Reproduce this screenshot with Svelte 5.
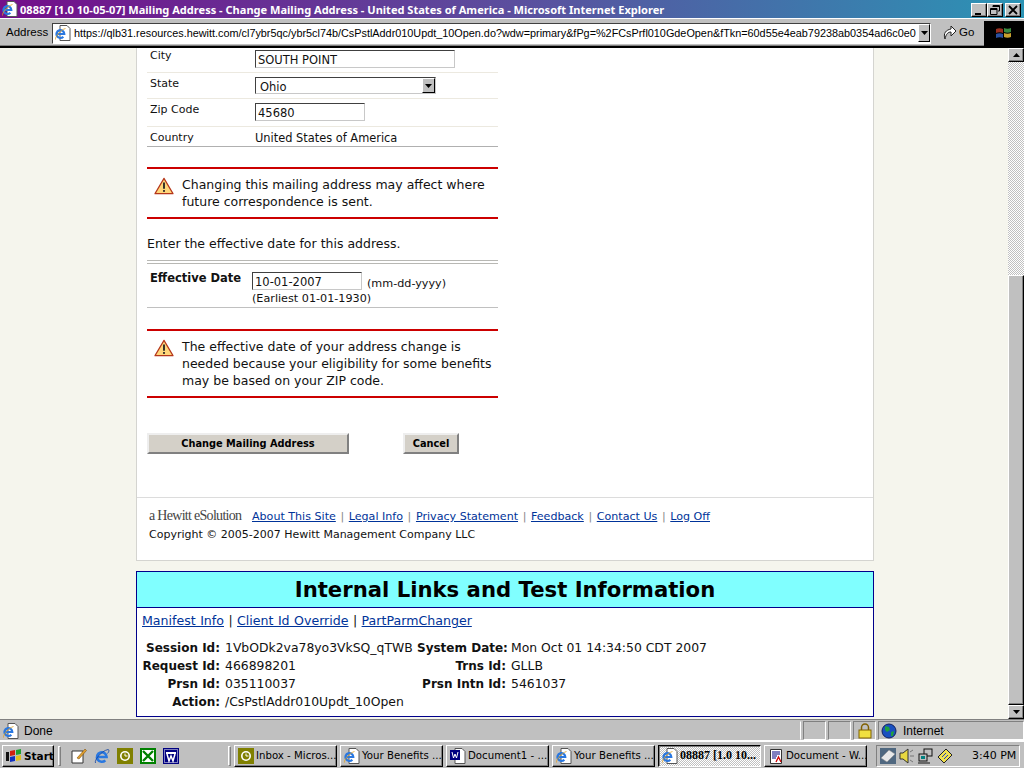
<script>
  const rows = [
    { label: 'City', value: 'SOUTH POINT', kind: 'input', cls: 'w-city', h: 25, pad: 1 },
    { label: 'State', value: 'Ohio', kind: 'select', h: 26, pad: 4 },
    { label: 'Zip Code', value: '45680', kind: 'input', cls: 'w-zip', h: 28, pad: 4 },
    { label: 'Country', value: 'United States of America', kind: 'text', h: 20, pad: 4 }
  ];

  const footerLinks = ['About This Site', 'Legal Info', 'Privacy Statement', 'Feedback', 'Contact Us', 'Log Off'];
  const testLinks = ['Manifest Info', 'Client Id Override', 'PartParmChanger'];

  const info = [
    ['Session Id:', '1VbODk2va78yo3VkSQ_qTWB', 'System Date:', 'Mon Oct 01 14:34:50 CDT 2007'],
    ['Request Id:', '466898201', 'Trns Id:', 'GLLB'],
    ['Prsn Id:', '035110037', 'Prsn Intn Id:', '5461037'],
    ['Action:', '/CsPstlAddr010Updt_10Open', '', '']
  ];

  const tasks = [
    { icon: 'clock', label: 'Inbox - Micros...' },
    { icon: 'page', label: 'Your Benefits ...' },
    { icon: 'word', label: 'Document1 - ...' },
    { icon: 'page', label: 'Your Benefits ...' },
    { icon: 'page', label: '08887 [1.0 10...', active: true },
    { icon: 'note', label: 'Document - W...' }
  ];
</script>

{#snippet ie(size)}
  <svg width={size} height={size} viewBox="0 0 16 16">
    <path d="M3 9h9.600a4.800 4.800 0 1 0-1.300 3.300" fill="none" stroke="#2a78e0" stroke-width="2.600" />
    <path d="M1.500 15C0 12.500 7 3 14 1.500c1.500 0 1 2.500-.5 4" fill="none" stroke="#1040a0" stroke-width=".8" />
  </svg>
{/snippet}

{#snippet warning()}
  <svg class="warn" width="20" height="18" viewBox="0 0 22 20">
    <path d="M11 1.500 21 18.500H1Z" fill="#ffd67a" stroke="#b5361a" stroke-width="1.300" stroke-linejoin="round" />
    <path d="M11 6v7" stroke="#222" stroke-width="2" />
    <rect x="10" y="14.500" width="2" height="2" fill="#222" />
  </svg>
{/snippet}

{#snippet clock()}
  <svg width="16" height="16" viewBox="0 0 16 16">
    <rect width="16" height="16" fill="#808000" />
    <circle cx="8" cy="8" r="5" fill="#fff" />
    <circle cx="8" cy="8" r="3.400" fill="#808000" />
    <path d="M8 5.500V8h2.500" fill="none" stroke="#fff" />
  </svg>
{/snippet}

{#snippet word()}
  <svg width="16" height="16" viewBox="0 0 16 16">
    <rect width="16" height="16" fill="#000080" />
    <rect x="1.500" y="1.500" width="13" height="13" fill="none" stroke="#fff" stroke-dasharray="1 1" />
    <path d="M3 4h10v2H3z" fill="#fff" />
    <path d="M4 6l2 7 2-5 2 5 2-7" fill="none" stroke="#fff" stroke-width="1.500" />
  </svg>
{/snippet}

{#snippet excel()}
  <svg width="16" height="16" viewBox="0 0 16 16">
    <rect width="16" height="16" fill="#008000" />
    <rect x="2" y="2" width="12" height="12" fill="#fff" />
    <path d="M3 3l10 10M13 3 3 13" stroke="#008000" stroke-width="2.400" />
  </svg>
{/snippet}

{#snippet pageIcon()}
  <svg width="16" height="16" viewBox="0 0 16 16">
    <path d="M5 .5h7l3 3v12H5Z" fill="#fff" stroke="#555" />
    <path d="M1.500 9h7.800a3.900 3.900 0 1 0-1 2.700" fill="none" stroke="#2a78e0" stroke-width="2.200" />
    <path d="M.5 14.500C0 12 5 5 10.500 3.500" fill="none" stroke="#e0a020" stroke-width=".8" />
  </svg>
{/snippet}

{#snippet taskIcon(name)}
  {#if name === 'clock'}
    {@render clock()}
  {:else if name === 'page'}
    {@render pageIcon()}
  {:else if name === 'word'}
    <svg width="16" height="16" viewBox="0 0 16 16">
      <path d="M5 .5h7l3 3v12H5Z" fill="#fff" stroke="#555" />
      <rect y="2" width="10" height="10" fill="#000080" />
      <path d="M2 4l1.500 6L5 6l1.500 4L8 4" fill="none" stroke="#fff" />
    </svg>
  {:else}
    <svg width="16" height="16" viewBox="0 0 16 16">
      <path d="M2.500 1.500h11v14h-11Z" fill="#fff" stroke="#333" />
      <path d="M4 4h8M4 6h8M4 8h5M4 10h4" stroke="#000080" />
      <path d="M8 14l2.500-5L13 14" fill="none" stroke="#d00000" stroke-width="1.300" />
    </svg>
  {/if}
{/snippet}

<div class="window">
  <header class="titlebar">
    <span class="title-icon">{@render pageIcon()}</span>
    <span class="title-text">08887 [1.0 10-05-07] Mailing Address - Change Mailing Address - United States of America - Microsoft Internet Explorer</span>
    <div class="caption">
      <button class="cap" aria-label="Minimize"><svg width="10" height="10"><path d="M1 8h6v2H1z" /></svg></button>
      <button class="cap" aria-label="Restore">
        <svg width="10" height="10" viewBox="0 0 10 10"><path d="M3 .5h6.500V6H8M3 .5V2M3 1.500h6.500" fill="none" stroke="#000" /><path d="M.5 3.500H7v6H.5ZM.5 4.500H7" fill="none" stroke="#000" /></svg>
      </button>
      <button class="cap close" aria-label="Close">
        <svg width="10" height="10" viewBox="0 0 10 10"><path d="M1 1l8 8M9 1 1 9" stroke="#000" stroke-width="1.800" /></svg>
      </button>
    </div>
  </header>

  <nav class="addressbar">
    <span class="addr-label">Address</span>
    <div class="addr-field">
      <span class="addr-icon">{@render pageIcon()}</span>
      <span class="addr-url">https://qlb31.resources.hewitt.com/cl7ybr5qc/ybr5cl74b/CsPstlAddr010Updt_10Open.do?wdw=primary&amp;fPg=%2FCsPrfl010GdeOpen&amp;fTkn=60d55e4eab79238ab0354ad6c0e0</span>
      <button class="drop" aria-label="Open list"><svg width="7" height="4"><path d="M0 0h7L3.500 4Z" /></svg></button>
    </div>
    <div class="go">
      <svg width="16" height="16" viewBox="0 0 16 16"><path d="M3 15C1 9 4 6 9 5V2l5 5-5 5V8C6 8 4 10 3 15Z" fill="#fff" stroke="#222" /></svg>
      <span>Go</span>
    </div>
    <div class="throbber">
      <svg width="18" height="16" viewBox="0 0 18 16">
        <path d="M1 4c2-1 5-1 7 0v4c-2-1-5-1-7 0Z" fill="#9a3020" />
        <path d="M9 3c2 1 5 1 7 0v4c-2 1-5 1-7 0Z" fill="#3a8a40" />
        <path d="M1 9c2-1 5-1 7 0v4c-2-1-5-1-7 0Z" fill="#2a50a0" />
        <path d="M9 8c2 1 5 1 7 0v4c-2 1-5 1-7 0Z" fill="#c8a030" />
      </svg>
    </div>
  </nav>

  <div class="viewport">
    <main class="page">
      <div class="sheet">
        <section class="form">
          {#each rows as row}
            <div class="row" style="height: {row.h}px; padding-top: {row.pad}px">
              <span class="label">{row.label}</span>
              {#if row.kind === 'input'}
                <span class="input {row.cls}">{row.value}</span>
              {:else if row.kind === 'select'}
                <span class="input select">
                  <span class="sel-val">{row.value}</span>
                  <span class="sel-btn"><svg width="7" height="4"><path d="M0 0h7L3.500 4Z" /></svg></span>
                </span>
              {:else}
                <span class="value">{row.value}</span>
              {/if}
            </div>
          {/each}

          <div class="alert first">
            {@render warning()}
            <p>Changing this mailing address may affect where future correspondence is sent.</p>
          </div>

          <p class="enter">Enter the effective date for this address.</p>

          <div class="date-row">
            <strong class="date-label">Effective Date</strong>
            <div class="date-col">
              <div class="date-line">
                <span class="input w-date">10-01-2007</span>
                <span class="hint">(mm-dd-yyyy)</span>
              </div>
              <span class="hint earliest">(Earliest 01-01-1930)</span>
            </div>
          </div>

          <div class="alert second">
            {@render warning()}
            <p>The effective date of your address change is needed because your eligibility for some benefits may be based on your ZIP code.</p>
          </div>

          <div class="actions">
            <button class="btn change">Change Mailing Address</button>
            <button class="btn cancel">Cancel</button>
          </div>
        </section>

        <footer class="foot">
          <div class="foot-links">
            <span class="brand">a Hewitt eSolution</span>
            {#each footerLinks as link, i}
              {#if i > 0}<span class="pipe">|</span>{/if}
              <a href="#top">{link}</a>
            {/each}
          </div>
          <div class="copy">Copyright © 2005-2007 Hewitt Management Company LLC</div>
        </footer>
      </div>

      <section class="test">
        <h1>Internal Links and Test Information</h1>
        <div class="test-links">
          {#each testLinks as link, i}
            {#if i > 0}{' | '}{/if}<a href="#top">{link}</a>
          {/each}
        </div>
        <div class="info">
          {#each info as r}
            <b>{r[0]}</b><span>{r[1]}</span><b>{r[2]}</b><span>{r[3]}</span>
          {/each}
        </div>
      </section>
    </main>

    <aside class="scrollbar">
      <button class="arrow" aria-label="Scroll up"><svg width="7" height="4"><path d="M3.500 0 7 4H0Z" /></svg></button>
      <div class="track"><div class="thumb"></div></div>
      <button class="arrow" aria-label="Scroll down"><svg width="7" height="4"><path d="M0 0h7L3.500 4Z" /></svg></button>
    </aside>
  </div>

  <div class="statusbar">
    <div class="st-main">
      <span class="st-icon">{@render pageIcon()}</span>
      <span>Done</span>
    </div>
    <div class="st-cell"></div>
    <div class="st-cell"></div>
    <div class="st-cell lock">
      <svg width="14" height="16" viewBox="0 0 14 16">
        <path d="M3.500 8V4.500a3.500 3.500 0 0 1 7 0V8" fill="none" stroke="#806000" stroke-width="1.500" />
        <rect x="1" y="7" width="12" height="8" fill="#f0e040" stroke="#806000" />
      </svg>
    </div>
    <div class="st-zone">
      <svg width="16" height="16" viewBox="0 0 16 16">
        <circle cx="8" cy="8" r="7" fill="#1a50c0" stroke="#102060" />
        <path d="M4 3l4 1 1 3-3 2-2-2ZM10 9l3-1-1 5-2 0Z" fill="#20a040" />
      </svg>
      <span>Internet</span>
    </div>
  </div>

  <footer class="taskbar">
    <button class="start">
      <svg width="16" height="14" viewBox="0 0 16 14">
        <path d="M0 3h3v9H0Z" fill="#111" />
        <path d="M4 2l5-1v5l-5 1Z" fill="#d02010" />
        <path d="M10 1l5-1v5l-5 1Z" fill="#20a030" />
        <path d="M4 8l5-1v5l-5 1Z" fill="#1030c0" />
        <path d="M10 7l5-1v5l-5 1Z" fill="#e0c020" />
      </svg>
      <span>Start</span>
    </button>
    <span class="grip"></span>
    <div class="quick">
      <svg width="16" height="16" viewBox="0 0 16 16">
        <path d="M1 3h11v12H1Z" fill="#fff" stroke="#333" />
        <path d="M6 10 14 1l1.500 1.500L8 11Z" fill="#e0a030" stroke="#704000" stroke-width=".5" />
      </svg>
      {@render ie(16)}
      {@render clock()}
      {@render excel()}
      {@render word()}
    </div>
    <span class="grip"></span>
    <div class="tasks">
      {#each tasks as task}
        <button class="task" class:active={task.active}>
          {@render taskIcon(task.icon)}
          <span>{task.label}</span>
        </button>
      {/each}
    </div>
    <div class="tray">
      <svg width="16" height="16" viewBox="0 0 16 16">
        <rect width="16" height="16" fill="#506880" />
        <path d="M1 10 9 2l6 4-8 8Z" fill="#e8e8e8" stroke="#888" stroke-width=".5" />
      </svg>
      <svg width="16" height="16" viewBox="0 0 16 16">
        <path d="M1 5h3l5-4v14l-5-4H1Z" fill="#e8d840" stroke="#333" />
        <path d="M11 8h4M11 4l3-2M11 12l3 2" stroke="#777" />
      </svg>
      <svg width="16" height="16" viewBox="0 0 16 16">
        <rect x="6" y="1" width="8" height="7" fill="#c0c0c0" stroke="#111" />
        <rect x="1" y="6" width="8" height="7" fill="#c0c0c0" stroke="#111" />
        <rect x="3" y="8" width="4" height="3" fill="#008080" />
        <path d="M0 15h12" stroke="#111" />
      </svg>
      <svg width="16" height="16" viewBox="0 0 16 16">
        <path d="M1 9 9 1l6 6-8 8Z" fill="#f0e050" stroke="#222" />
        <path d="M5 9l4-4M7 11l4-4" stroke="#2040c0" />
      </svg>
      <span class="clock">3:40 PM</span>
    </div>
  </footer>
</div>

<style>
  :global(body) {
    margin: 0;
    overflow: hidden;
    background: #c0c0c0;
  }

  button {
    padding: 0;
    font: inherit;
    color: #000;
    background: #c0c0c0;
  }

  svg {
    display: block;
    flex: none;
  }

  .window {
    display: flex;
    flex-direction: column;
    width: 1024px;
    height: 768px;
    overflow: hidden;
    font-family: "Liberation Sans", Arial, sans-serif;
    font-size: 12px;
    background: #c0c0c0;
  }

  /* title bar */
  .titlebar {
    display: flex;
    align-items: center;
    flex: none;
    height: 18px;
    padding: 0 3px 0 2px;
    color: #fff;
    background: linear-gradient(90deg, #740e8a 0%, #5b4e9e 50%, #2b94b5 100%);
  }

  .title-icon {
    margin-right: 2px;
  }

  .title-text {
    flex: 1;
    font-family: "Noto Sans", sans-serif;
    font-size: 11.050px;
    font-weight: 700;
    white-space: nowrap;
  }

  .caption {
    display: flex;
  }

  .cap {
    display: flex;
    align-items: center;
    justify-content: center;
    width: 16px;
    height: 14px;
    margin-top: 1px;
    border: 1px solid;
    border-color: #fff #000 #000 #fff;
    box-shadow: inset -1px -1px 0 #808080;
  }

  .close {
    margin-left: 2px;
  }

  /* address row */
  .addressbar {
    display: flex;
    align-items: center;
    flex: none;
    height: 24px;
    padding-top: 2px;
    border-top: 1px solid #fff;
    border-bottom: 1px solid #808080;
  }

  .addr-label {
    width: 49px;
    padding-left: 6px;
    box-sizing: border-box;
    font-size: 11.500px;
    margin-bottom: 3px;
  }

  .addr-field {
    display: flex;
    align-items: center;
    width: 879px;
    height: 21px;
    margin-left: 3px;
    overflow: hidden;
    box-sizing: border-box;
    background: #fff;
    border: 1px solid;
    border-color: #404040 #fff #fff #404040;
  }

  .addr-icon {
    margin: 0 3px 0 2px;
  }

  .addr-url {
    flex: 1;
    overflow: hidden;
    font-size: 10.850px;
    white-space: nowrap;
  }

  .drop,
  .sel-btn {
    display: flex;
    align-items: center;
    justify-content: center;
    flex: none;
    box-sizing: border-box;
    border: 1px solid;
    border-color: #fff #000 #000 #fff;
    background: #c0c0c0;
  }

  .drop {
    width: 12px;
    height: 18px;
  }

  .go {
    display: flex;
    align-items: center;
    gap: 1px;
    width: 52px;
    padding-left: 11px;
    box-sizing: border-box;
    font-size: 11.500px;
    margin-bottom: 2px;
  }

  .throbber {
    display: flex;
    align-items: center;
    justify-content: center;
    width: 40px;
    height: 25px;
    margin-left: auto;
    background: #000;
  }

  /* browser viewport */
  .viewport {
    display: flex;
    flex: none;
    height: 673px;
    overflow: hidden;
    border-top: 2px solid #000;
    box-sizing: border-box;
  }

  .page {
    flex: 1;
    padding: 0 134px 0 136px;
    background: #f5f5ed;
    font-family: "DejaVu Sans", sans-serif;
    font-size: 11px;
    color: #111;
  }

  .sheet {
    height: 513px;
    box-sizing: border-box;
    background: #fff;
    border: 1px solid #d4d4d0;
    border-top: 0;
  }

  .form {
    width: 351px;
    height: 449px;
    margin-left: 10px;
  }

  .row {
    display: flex;
    align-items: flex-start;
    box-sizing: border-box;
    padding-left: 3px;
    border-bottom: 1px solid #ece9e0;
  }

  .row:nth-child(4) {
    border-bottom-color: #b0b0b0;
  }

  .label {
    width: 105px;
    flex: none;
  }

  .value {
    font-size: 11.400px;
  }

  .input {
    display: block;
    box-sizing: border-box;
    height: 18px;
    padding: 3px 2px 1px;
    font-size: 11.500px;
    line-height: 13px;
    background: #fff;
    border: 1px solid;
    border-color: #404040 #c8c8c8 #c8c8c8 #404040;
    white-space: nowrap;
  }

  .w-city {
    width: 200px;
    margin-top: 1px;
  }

  .w-zip {
    width: 110px;
  }

  .w-date {
    width: 110px;
  }

  .select {
    display: flex;
    align-items: flex-start;
    justify-content: space-between;
    width: 181px;
    height: 17px;
    padding: 0 0 0 4px;
  }

  .sel-val {
    padding-top: 3px;
  }

  .sel-btn {
    width: 13px;
    height: 15px;
  }

  .alert {
    display: flex;
    align-items: flex-start;
    box-sizing: border-box;
    padding-left: 6px;
    border-top: 2px solid #cc0000;
    border-bottom: 2px solid #cc0000;
  }

  .alert p {
    margin: 0 0 0 7px;
    font-size: 12.500px;
    line-height: 17px;
  }

  .warn {
    margin: 1px 1px 0;
  }

  .first {
    height: 52px;
    margin-top: 20px;
    padding-top: 7px;
  }

  .enter {
    margin: 16px 0 0;
    font-size: 12.500px;
    line-height: 17px;
  }

  .date-row {
    display: flex;
    height: 48px;
    box-sizing: border-box;
    margin-top: 8px;
    padding: 8px 0 0 3px;
    border-top: 4px double #b8b8b4;
    border-bottom: 1px solid #c0c0c0;
  }

  .date-label {
    width: 102px;
    flex: none;
    font-size: 11.500px;
    line-height: 13px;
  }

  .date-line {
    display: flex;
    align-items: flex-start;
    gap: 5px;
  }

  .date-line .hint {
    padding-top: 5px;
  }

  .hint {
    font-size: 11.200px;
  }

  .earliest {
    display: block;
    margin-top: 2px;
    line-height: 14px;
  }

  .second {
    height: 69px;
    margin-top: 21px;
    padding-top: 7px;
  }

  .actions {
    display: flex;
    margin-top: 35px;
  }

  .btn {
    height: 21px;
    box-sizing: border-box;
    font-family: "DejaVu Sans", sans-serif;
    font-size: 9.800px;
    font-weight: 700;
    background: #d4d0c8;
    border: 2px solid;
    border-color: #eeeeee #808080 #808080 #eeeeee;
  }

  .change {
    width: 202px;
  }

  .cancel {
    width: 56px;
    margin-left: 54px;
  }

  .foot {
    height: 63px;
    padding: 10px 0 0 12px;
    box-sizing: border-box;
    border-top: 1px solid #dcdcdc;
  }

  .foot-links {
    display: flex;
    align-items: baseline;
    gap: 4.600px;
    font-size: 11.100px;
  }

  .brand {
    margin-right: 6px;
    font-family: "Liberation Serif", serif;
    font-size: 14px;
    letter-spacing: -0.700px;
    color: #444;
  }

  .pipe {
    color: #888;
  }

  a {
    color: #003399;
  }

  .copy {
    margin-top: 4px;
    font-size: 11px;
  }

  /* test panel */
  .test {
    height: 146px;
    margin-top: 10px;
    box-sizing: border-box;
    background: #fff;
    border: 1px solid #00008b;
  }

  .test h1 {
    margin: 0;
    height: 36px;
    box-sizing: border-box;
    font-size: 21.200px;
    line-height: 36px;
    text-align: center;
    color: #000;
    background: #80ffff;
    border-bottom: 1px solid #00008b;
  }

  .test-links {
    padding: 4px 0 0 5px;
    font-size: 12.600px;
    line-height: 17px;
    word-spacing: 0.400px;
  }

  .test-links a {
    color: #003399;
  }

  .info {
    display: grid;
    grid-template-columns: 78px 197px 89px 1fr;
    grid-auto-rows: 18px;
    margin: 10px 0 0 5px;
    font-size: 12px;
    line-height: 18px;
    white-space: nowrap;
  }

  .info b {
    text-align: right;
  }

  .info span {
    padding-left: 5px;
    font-size: 12.400px;
  }

  /* scrollbar */
  .scrollbar {
    display: flex;
    flex-direction: column;
    flex: none;
    width: 16px;
    background: #f5f5ed;
  }

  .arrow {
    display: flex;
    align-items: center;
    justify-content: center;
    flex: none;
    width: 16px;
    height: 14px;
    box-sizing: border-box;
    border: 1px solid;
    border-color: #fff #000 #000 #fff;
    box-shadow: inset -1px -1px 0 #808080;
  }

  .track {
    display: flex;
    flex: 1;
    flex-direction: column;
    justify-content: flex-end;
    background: repeating-conic-gradient(#fff 0 25%, #c0c0c0 0 50%) 0 0 / 2px 2px;
  }

  .thumb {
    height: 430px;
    box-sizing: border-box;
    background: #c0c0c0;
    border: 1px solid;
    border-color: #fff #000 #000 #fff;
    box-shadow: inset -1px -1px 0 #808080;
  }

  /* status bar */
  .statusbar {
    display: flex;
    flex: none;
    gap: 2px;
    height: 22px;
    padding-top: 1px;
    box-sizing: border-box;
    border-top: 1px solid #808080;
    border-bottom: 1px solid #fff;
  }

  .st-main,
  .st-cell,
  .st-zone {
    display: flex;
    align-items: center;
    box-sizing: border-box;
    border: 1px solid;
    border-color: #808080 #fff #fff #808080;
  }

  .st-main {
    flex: 1;
    gap: 5px;
    padding-left: 2px;
    border-color: transparent #fff transparent transparent;
  }

  .st-cell {
    width: 23px;
  }

  .lock {
    justify-content: center;
  }

  .st-zone {
    gap: 6px;
    width: 146px;
    padding-left: 2px;
    font-size: 12px;
  }

  /* taskbar */
  .taskbar {
    display: flex;
    align-items: center;
    flex: 1;
    padding: 1px 3px 0 2px;
    border-top: 1px solid #fff;
    font-size: 12px;
  }

  .start {
    display: flex;
    align-items: center;
    gap: 2px;
    width: 52px;
    height: 22px;
    padding-left: 3px;
    box-sizing: border-box;
    font-family: "DejaVu Sans", sans-serif;
    font-size: 10.500px;
    font-weight: 700;
    border: 1px solid;
    border-color: #fff #000 #000 #fff;
    box-shadow: inset -1px -1px 0 #808080;
  }

  .grip {
    width: 3px;
    height: 20px;
    margin-left: 4px;
    border: 1px solid;
    border-color: #fff #808080 #808080 #fff;
    box-sizing: border-box;
  }

  .quick {
    display: flex;
    gap: 7px;
    width: 163px;
    padding-left: 10px;
    box-sizing: border-box;
  }

  .tasks {
    display: flex;
    gap: 3px;
    margin-left: 3px;
  }

  .task {
    display: flex;
    align-items: center;
    gap: 2px;
    width: 103px;
    height: 22px;
    padding-left: 3px;
    box-sizing: border-box;
    overflow: hidden;
    font-family: "DejaVu Sans", sans-serif;
    font-size: 10.200px;
    white-space: nowrap;
    border: 1px solid;
    border-color: #fff #000 #000 #fff;
    box-shadow: inset -1px -1px 0 #808080;
  }

  .task.active {
    font-family: "Liberation Serif", serif;
    font-size: 12px;
    font-weight: 700;
    border-color: #000 #fff #fff #000;
    box-shadow: inset 1px 1px 0 #808080;
    background: repeating-conic-gradient(#fff 0 25%, #c0c0c0 0 50%) 0 0 / 2px 2px;
  }

  .tray {
    display: flex;
    align-items: center;
    gap: 3px;
    width: 144px;
    height: 22px;
    margin-left: 9px;
    padding-left: 3px;
    box-sizing: border-box;
    border: 1px solid;
    border-color: #808080 #fff #fff #808080;
  }

  .clock {
    margin-left: 16px;
    font-family: "DejaVu Sans", sans-serif;
    font-size: 11px;
    white-space: nowrap;
  }
</style>
